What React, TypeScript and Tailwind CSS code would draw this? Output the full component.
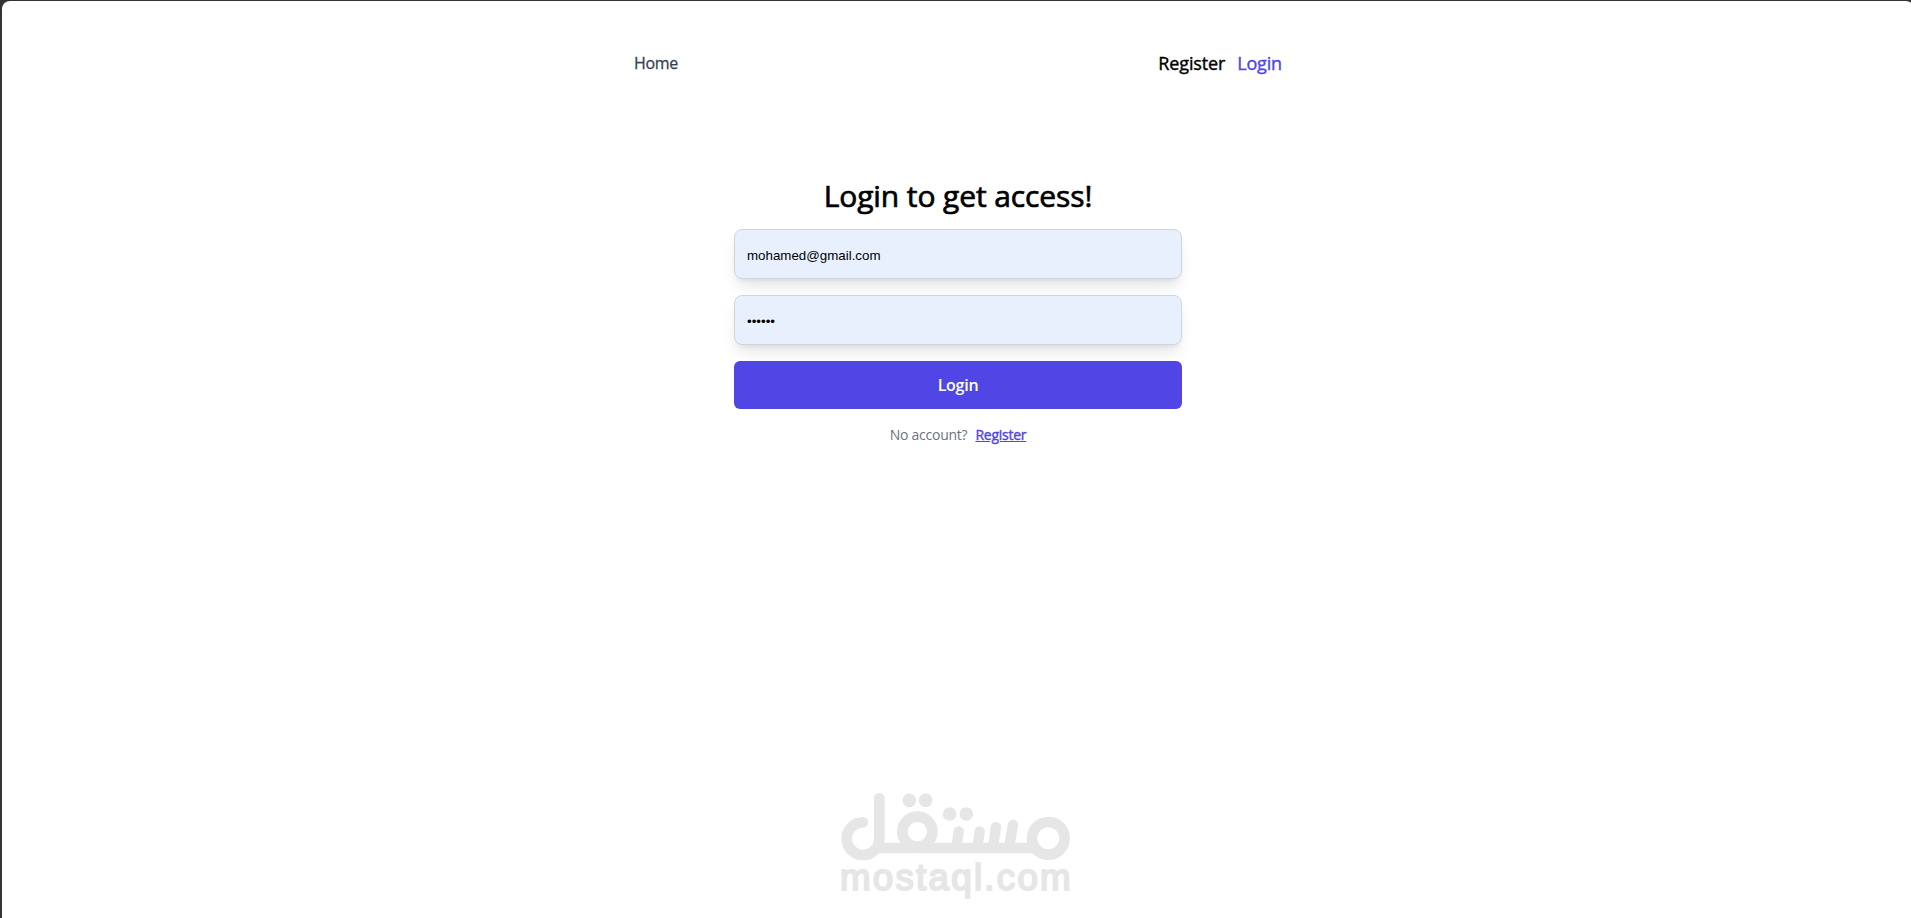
import { useState } from "react";

const Navbar = () => {
  return (
    <nav className="mx-auto flex h-[125px] w-full max-w-2xl items-center justify-between px-3">
      <a
        href="#"
        className="pb-0.5 text-[16px] tracking-[-0.3px] text-[#374151] [-webkit-text-stroke:0.3px]"
      >
        Home
      </a>
      <div className="flex items-center gap-3 text-[18px] tracking-[-0.15px] [-webkit-text-stroke:0.4px]">
        <a href="#" className="text-black">
          Register
        </a>
        <a href="#" className="text-[#4f46e5]">
          Login
        </a>
      </div>
    </nav>
  );
};

const inputClass =
  "h-[50px] w-full rounded-lg border border-[#d1d5db] bg-[#e8f0fe] px-3 pt-0.5 font-['Liberation_Sans',sans-serif] text-[13.33px] text-black shadow-lg outline-none";

const LoginForm = () => {
  const [email, setEmail] = useState("mohamed@gmail.com");
  const [password, setPassword] = useState("123456");

  return (
    <form className="mx-auto mt-[49px] flex w-full max-w-md flex-col">
      <h1 className="mb-[13px] text-center text-[30px] leading-[41px] tracking-[-0.1px] text-black [-webkit-text-stroke:0.7px]">
        Login to get access!
      </h1>
      <div className="flex flex-col gap-4">
        <input
          type="email"
          value={email}
          onChange={(e) => setEmail(e.target.value)}
          className={inputClass}
        />
        <input
          type="password"
          value={password}
          onChange={(e) => setPassword(e.target.value)}
          className={inputClass}
        />
        <button
          type="button"
          className="h-12 w-full rounded-md bg-[#4f46e5] text-[16px] font-semibold tracking-[-0.25px] text-white"
        >
          Login
        </button>
      </div>
      <p className="mt-4 flex justify-center gap-2 text-[14px] leading-5 tracking-[-0.25px] text-[#6b7280]">
        <span>No account?</span>
        <a href="#" className="text-[#4f46e5] underline [-webkit-text-stroke:0.4px]">
          Register
        </a>
      </p>
    </form>
  );
};

const Watermark = () => {
  return (
    <svg
      viewBox="0 0 750 390"
      className="pointer-events-none absolute top-[778px] left-[828px] h-[130px] w-[250px]"
      fill="none"
      stroke="#e6e6e6"
      strokeWidth="32"
      strokeLinecap="round"
    >
      <path d="M99 130A49 49 0 1 0 148 178V58" />
      <path d="M136 207H624" strokeLinecap="butt" />
      <circle cx="262" cy="158" r="45" />
      <circle cx="655" cy="178" r="49" />
      <path d="M386 157L380 200M449 157L443 200M498 144L490 200M549 137L538 200" strokeWidth="31" />
      <g fill="#e6e6e6" stroke="none">
        <circle cx="238" cy="64" r="20.5" />
        <circle cx="287" cy="64" r="20.5" />
        <circle cx="359" cy="105" r="20.5" />
        <circle cx="409" cy="105" r="20.5" />
      </g>
      <text
        x="30"
        y="333"
        textLength="692"
        fill="#e6e6e6"
        strokeWidth="6"
        strokeLinejoin="round"
        className="font-['Liberation_Sans',sans-serif] text-[110px]"
      >
        mostaql.com
      </text>
    </svg>
  );
};

export default function App() {
  return (
    <div className="h-[918px] overflow-hidden bg-[#333333] pt-px pl-0.5 font-['Open_Sans','Noto_Sans',sans-serif]">
      <div className="relative h-[917px] w-[1912px] rounded-t-lg bg-white">
        <Navbar />
        <LoginForm />
        <Watermark />
      </div>
    </div>
  );
}
